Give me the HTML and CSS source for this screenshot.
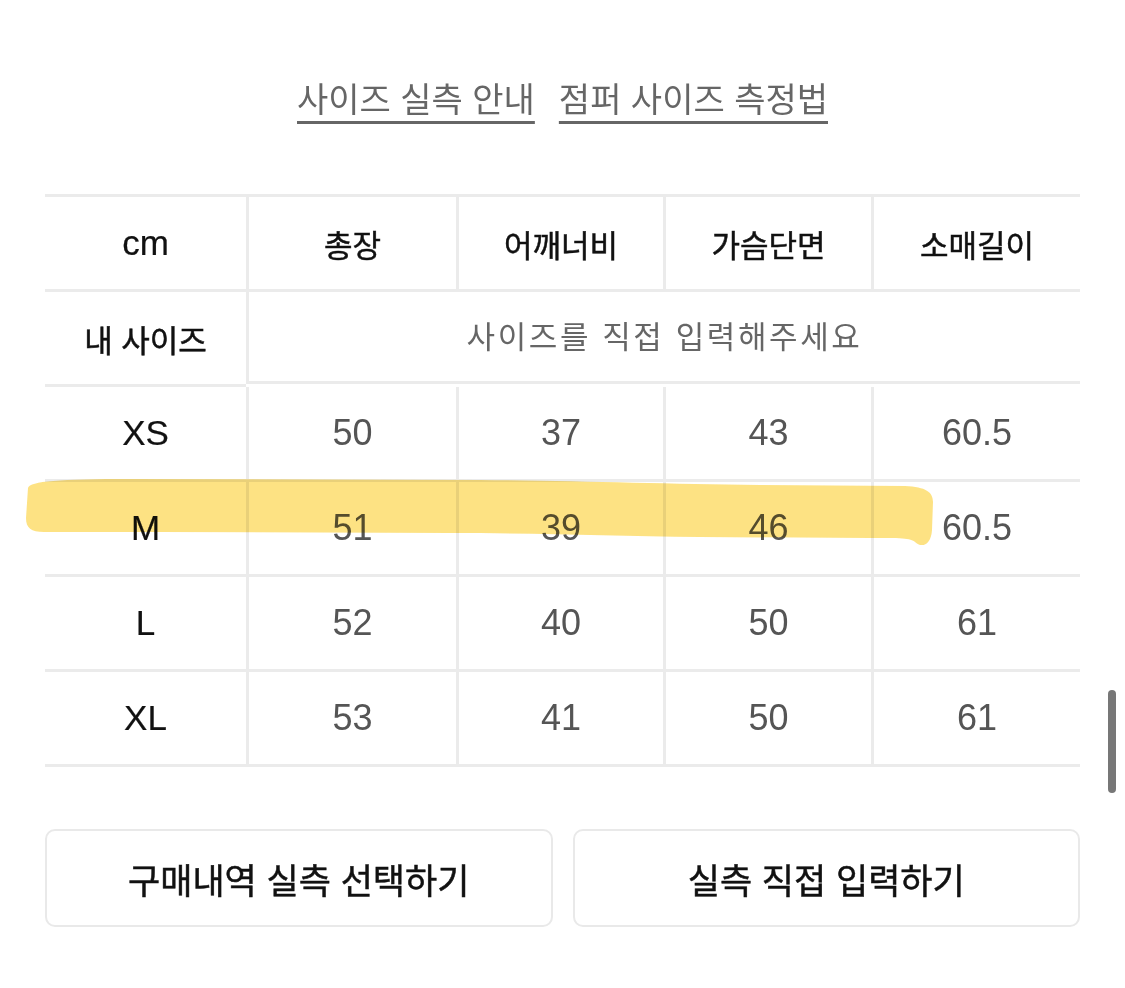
FILE: index.html
```html
<!DOCTYPE html>
<html lang="ko">
<head>
    <meta charset="UTF-8">
    <meta name="viewport" content="width=device-width, initial-scale=1.0">
    <title>사이즈 정보</title>
    <link rel="stylesheet" href="styles.css">
</head>
<body>
    <div class="page">
        <div class="links">
            <a href="#">사이즈 실측 안내</a>
            <a href="#">점퍼 사이즈 측정법</a>
        </div>

        <div class="size-table">
            <div class="cell head first latin">cm</div>
            <div class="cell head">총장</div>
            <div class="cell head">어깨너비</div>
            <div class="cell head">가슴단면</div>
            <div class="cell head">소매길이</div>

            <div class="cell head first">내 사이즈</div>
            <div class="cell hint span-4">사이즈를 직접 입력해주세요</div>

            <div class="cell head first latin">XS</div>
            <div class="cell">50</div>
            <div class="cell">37</div>
            <div class="cell">43</div>
            <div class="cell">60.5</div>

            <div class="cell head first latin">M</div>
            <div class="cell">51</div>
            <div class="cell">39</div>
            <div class="cell">46</div>
            <div class="cell">60.5</div>

            <div class="cell head first latin">L</div>
            <div class="cell">52</div>
            <div class="cell">40</div>
            <div class="cell">50</div>
            <div class="cell">61</div>

            <div class="cell head first latin">XL</div>
            <div class="cell">53</div>
            <div class="cell">41</div>
            <div class="cell">50</div>
            <div class="cell">61</div>
        </div>

        <div class="actions">
            <button type="button">구매내역 실측 선택하기</button>
            <button type="button">실측 직접 입력하기</button>
        </div>

        <!-- marker stroke drawn over the M row -->
        <svg class="marker" width="1125" height="988" viewBox="0 0 1125 988">
            <path d="M28,488 C30,481 60,479 130,479 L480,480 C580,481 660,484 760,485 L905,486 C926,487 933,492 933,502 L932,530 C931,546 921,548 915,542 C911,538 900,538 870,538 L700,537 C610,536 540,533 450,533 L160,532 L44,532 C31,532 26,528 26,518 Z"/>
        </svg>

        <div class="scrollbar"></div>
    </div>
</body>
</html>
```

FILE: styles.css
```css
body { margin: 0; background: #fff; font-family: "Liberation Sans", "Noto Sans CJK KR", sans-serif; color: #111; }
.page { position: relative; width: 1125px; height: 988px; padding: 0 45px; box-sizing: border-box; overflow: hidden; }

.links { margin-top: 76px; height: 48px; line-height: 48px; display: flex; justify-content: center; gap: 24px; }
.links a { color: #666; font-size: 34px; text-decoration: underline; text-decoration-thickness: 3px; text-underline-offset: 9px; }

.size-table { margin-top: 70px; display: grid; grid-template-columns: 201px 210px 207px 208px 209px; border-top: 3px solid #ebebeb; }
.cell { height: 92px; border-bottom: 3px solid #ebebeb; border-left: 3px solid #ebebeb; display: flex; align-items: center; justify-content: center; font-size: 36px; color: #555; }
.cell.first { border-left: none; }
.head { color: #111; font-size: 31px; -webkit-text-stroke: 0.5px #111; }
.head.latin { font-size: 35px; -webkit-text-stroke: 0.2px #111; }
.cell.span-4 { grid-column: span 4; }
.hint { font-size: 31px; color: #666; letter-spacing: 2.6px; padding-bottom: 4px; box-sizing: border-box; }

.actions { margin-top: 62px; display: flex; gap: 20px; }
.actions button { flex: 1; height: 98px; background: #fff; border: 2px solid #e9e9e9; border-radius: 10px; font-family: "Liberation Sans", "Noto Sans CJK KR", sans-serif; font-size: 35px; color: #111; -webkit-text-stroke: 0.5px #111; cursor: pointer; }

.marker { position: absolute; left: 0; top: 0; pointer-events: none; mix-blend-mode: multiply; }
.marker path { fill: #fde078; opacity: 0.92; }

.scrollbar { position: absolute; left: 1108px; top: 690px; width: 8px; height: 103px; border-radius: 4px; background: #777; }
```
